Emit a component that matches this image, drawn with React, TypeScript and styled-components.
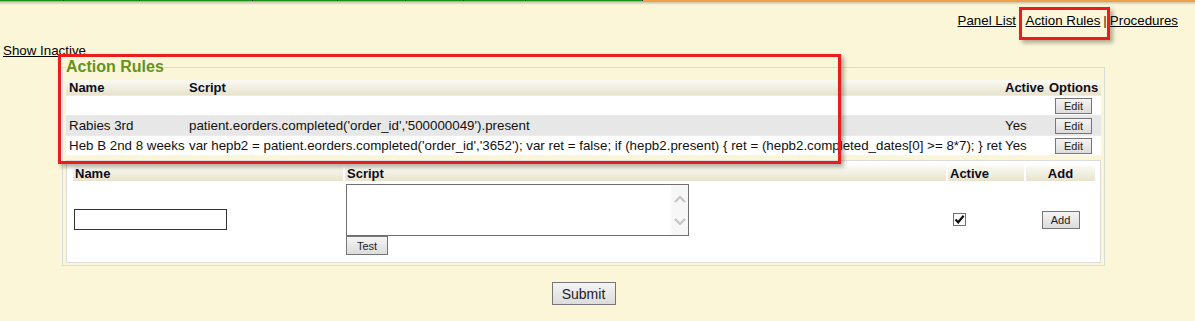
import styled, { createGlobalStyle } from "styled-components";

const GlobalStyle = createGlobalStyle`
  body {
    margin: 0;
    background: #fbf6d8;
    font-family: "Liberation Sans", Arial, sans-serif;
    font-size: 13px;
    color: #000;
  }
`;

const tabWidths = [64, 76, 113, 85, 68, 58, 62, 117];

interface Rule {
  name: string;
  script: string;
  active: string;
}

const rules: Rule[] = [
  { name: "", script: "", active: "" },
  {
    name: "Rabies 3rd",
    script: "patient.eorders.completed('order_id','500000049').present",
    active: "Yes"
  },
  {
    name: "Heb B 2nd 8 weeks",
    script:
      "var hepb2 = patient.eorders.completed('order_id','3652'); var ret = false; if (hepb2.present) { ret = (hepb2.completed_dates[0] >= 8*7); } ret",
    active: "Yes"
  }
];

const App = () => {
  return (
    <Page>
      <GlobalStyle />
      <TopBar>
        {tabWidths.map((w, i) => (
          <Tab key={i} $width={w} />
        ))}
        <TabRest />
      </TopBar>
      <BarEdge />
      <BarShadow />

      <NavRow>
        <NavLink href="#">Panel List</NavLink>
        <NavSep>|</NavSep>
        <NavLink href="#">Action Rules</NavLink>
        <NavSep>|</NavSep>
        <NavLink href="#">Procedures</NavLink>
      </NavRow>

      <Toolbar>
        <NavLink href="#">Show Inactive</NavLink>
      </Toolbar>

      <FormArea>
        <Fieldset>
          <Legend>Action Rules</Legend>
          <RulesTable>
            <colgroup>
              <col style={{ width: 120 }} />
              <col style={{ width: 816 }} />
              <col style={{ width: 44 }} />
              <col />
            </colgroup>
            <thead>
              <tr>
                <HeadCell>Name</HeadCell>
                <HeadCell>Script</HeadCell>
                <HeadCell>Active</HeadCell>
                <HeadCell>Options</HeadCell>
              </tr>
            </thead>
            <tbody>
              {rules.map((r, i) => (
                <RuleRow key={i} $shade={i === 1}>
                  <Cell>{r.name}</Cell>
                  <Cell>{r.script}</Cell>
                  <Cell>{r.active}</Cell>
                  <OptionCell>
                    <SmallButton $w={37} $h={16}>Edit</SmallButton>
                  </OptionCell>
                </RuleRow>
              ))}
            </tbody>
          </RulesTable>

          <AddBox>
            <AddTable>
              <colgroup>
                <col style={{ width: 270 }} />
                <col style={{ width: 601 }} />
                <col style={{ width: 76 }} />
                <col style={{ width: 69 }} />
              </colgroup>
              <thead>
                <tr>
                  <AddHead>Name</AddHead>
                  <AddHead>Script</AddHead>
                  <AddHead>Active</AddHead>
                  <AddHead $center>Add</AddHead>
                </tr>
              </thead>
              <tbody>
                <tr>
                  <NameCell>
                    <NameInput type="text" />
                  </NameCell>
                  <ScriptCell>
                    <ScriptBox>
                      <ScriptInput />
                      <ScrollTrack>
                        <svg width="12" height="8" viewBox="0 0 12 8">
                          <path d="M1 7 L6 2 L11 7" fill="none" stroke="#c4c4c4" strokeWidth="2" />
                        </svg>
                        <svg width="12" height="8" viewBox="0 0 12 8">
                          <path d="M1 1 L6 6 L11 1" fill="none" stroke="#c4c4c4" strokeWidth="2" />
                        </svg>
                      </ScrollTrack>
                    </ScriptBox>
                    <SmallButton $w={42} $h={19}>Test</SmallButton>
                  </ScriptCell>
                  <ActiveCell>
                    <CheckBox>
                      <svg width="11" height="11" viewBox="0 0 11 11">
                        <path d="M1.5 5.5 L4.2 8.3 L9.6 1.8" fill="none" stroke="#111" strokeWidth="2.2" />
                      </svg>
                    </CheckBox>
                  </ActiveCell>
                  <AddCell>
                    <SmallButton $w={38} $h={18}>Add</SmallButton>
                  </AddCell>
                </tr>
              </tbody>
            </AddTable>
          </AddBox>
        </Fieldset>
        <SubmitRow>
          <SubmitButton>Submit</SubmitButton>
        </SubmitRow>
      </FormArea>

      <Annotation $x={1019} $y={7} $w={91} $h={33} />
      <Annotation $x={58} $y={54} $w={783} $h={110} />
    </Page>
  );
};

const Page = styled.div`
  position: relative;
  width: 1195px;
  height: 321px;
  overflow: hidden;
`;

const TopBar = styled.div`
  display: flex;
  height: 1px;
`;

const Tab = styled.div<{ $width: number }>`
  width: ${({ $width }) => $width}px;
  box-sizing: border-box;
  background: #17901a;
  border-right: 1px solid #1d2a14;
`;

const TabRest = styled.div`
  flex: 1;
  background: #f2a24c;
`;

const BarEdge = styled.div`
  height: 1px;
  background: #b4ad95;
`;

const BarShadow = styled.div`
  height: 3px;
  background: linear-gradient(rgba(120, 110, 80, 0.35), rgba(120, 110, 80, 0));
`;

const NavRow = styled.div`
  display: flex;
  justify-content: flex-end;
  align-items: baseline;
  padding: 8px 17px 0 0;
  line-height: 15px;
`;

const NavLink = styled.a`
  color: #000;
  text-decoration: underline;
  font-size: 13.33px;
`;

const NavSep = styled.span`
  margin: 0 3px;
  color: #222;
  font-size: 13.33px;
`;

const Toolbar = styled.div`
  margin-top: 15px;
  padding-left: 3px;
  line-height: 15px;
`;

const FormArea = styled.div`
  margin-left: 62px;
  width: 1043px;
`;

const Fieldset = styled.fieldset`
  margin: 0;
  padding: 0 3px 2px;
  border: 1px solid #dcdcd6;
  min-width: 0;
`;

const Legend = styled.legend`
  padding: 0;
  font-size: 16px;
  font-weight: bold;
  line-height: 18px;
  color: #63921f;
`;

const RulesTable = styled.table`
  width: 100%;
  table-layout: fixed;
  border-collapse: collapse;
  margin: 4px 0 5px;
`;

const HeadCell = styled.th`
  text-align: left;
  padding: 0 3px;
  height: 15px;
  line-height: 15px;
  font-size: 13px;
  font-weight: bold;
  color: #0c0c1a;
  white-space: nowrap;
  background: linear-gradient(#fbfaf3, #e7e3cd);
`;

const RuleRow = styled.tr<{ $shade?: boolean }>`
  background: ${({ $shade }) => ($shade ? "#e7e7e7" : "#ffffff")};
`;

const Cell = styled.td`
  padding: 0 3px;
  height: 19px;
  border-top: 1px solid #f3edc9;
  white-space: nowrap;
  overflow: hidden;
  color: #111;
  font-size: 13.33px;
`;

const OptionCell = styled(Cell)`
  text-align: center;
  overflow: visible;
`;

const SmallButton = styled.button<{ $w: number; $h: number }>`
  display: inline-block;
  width: ${({ $w }) => $w}px;
  height: ${({ $h }) => $h}px;
  padding: 0;
  box-sizing: border-box;
  border: 1px solid #767676;
  background: linear-gradient(#f4f4f4, #dcdcdc);
  font-family: "Liberation Sans", Arial, sans-serif;
  font-size: 11px;
  color: #222;
  vertical-align: middle;
`;

const AddBox = styled.div`
  border: 1px solid #dcdcdc;
  background: #fff;
  padding: 3px 3px 4px 4px;
`;

const AddTable = styled.table`
  width: 100%;
  table-layout: fixed;
  border-collapse: separate;
  border-spacing: 2px;
`;

const AddHead = styled.th<{ $center?: boolean }>`
  text-align: ${({ $center }) => ($center ? "center" : "left")};
  padding: 0 2px;
  height: 15px;
  line-height: 15px;
  font-size: 13px;
  font-weight: bold;
  color: #0c0c1a;
  background: linear-gradient(#fbfaf3, #e7e3cd);
`;

const NameCell = styled.td`
  padding: 1px;
  vertical-align: middle;
`;

const NameInput = styled.input`
  display: block;
  width: 153px;
  height: 21px;
  box-sizing: border-box;
  border: 1px solid #333;
  background: #fff;
  margin: 0;
  padding: 1px 2px;
`;

const ScriptCell = styled.td`
  padding: 1px 0 1px 1px;
  vertical-align: top;
`;

const ScriptBox = styled.div`
  display: flex;
  width: 343px;
  height: 52px;
  box-sizing: border-box;
  border: 1px solid #707070;
  background: #fff;
`;

const ScriptInput = styled.textarea`
  flex: 1;
  border: none;
  outline: none;
  resize: none;
  padding: 2px;
  margin: 0;
  font-family: "Liberation Mono", monospace;
  font-size: 13px;
`;

const ScrollTrack = styled.div`
  width: 17px;
  background: #f7f7f7;
  display: flex;
  flex-direction: column;
  justify-content: space-around;
  align-items: center;
  padding: 2px 0;
`;

const ActiveCell = styled.td`
  padding: 0 0 0 5px;
  vertical-align: middle;
`;

const CheckBox = styled.span`
  display: flex;
  align-items: center;
  justify-content: center;
  width: 13px;
  height: 13px;
  box-sizing: border-box;
  border: 1px solid #6f6f6f;
  background: #fff;
`;

const AddCell = styled.td`
  text-align: center;
  vertical-align: middle;
  padding: 0;
`;

const SubmitRow = styled.div`
  display: flex;
  justify-content: center;
  margin-top: 16px;
`;

const SubmitButton = styled.button`
  width: 64px;
  height: 23px;
  padding: 0;
  box-sizing: border-box;
  border: 1px solid #767676;
  background: linear-gradient(#f4f4f4, #dcdcdc);
  font-family: "Liberation Sans", Arial, sans-serif;
  font-size: 14px;
  color: #1c1c2a;
`;

const Annotation = styled.div<{ $x: number; $y: number; $w: number; $h: number }>`
  position: absolute;
  left: ${({ $x }) => $x}px;
  top: ${({ $y }) => $y}px;
  width: ${({ $w }) => $w}px;
  height: ${({ $h }) => $h}px;
  box-sizing: border-box;
  border: 3px solid #ec1c1c;
  box-shadow: 3px 3px 4px rgba(60, 60, 40, 0.4);
  pointer-events: none;
`;

export default App;
